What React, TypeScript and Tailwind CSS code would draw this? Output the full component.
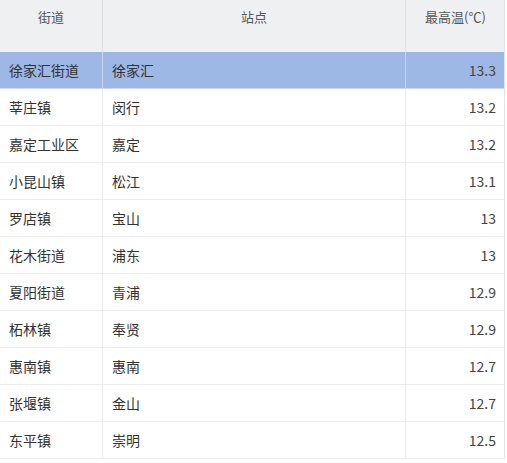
import React from "react";

const rows: [string, string, string][] = [
  ["徐家汇街道", "徐家汇", "13.3"],
  ["莘庄镇", "闵行", "13.2"],
  ["嘉定工业区", "嘉定", "13.2"],
  ["小昆山镇", "松江", "13.1"],
  ["罗店镇", "宝山", "13"],
  ["花木街道", "浦东", "13"],
  ["夏阳街道", "青浦", "12.9"],
  ["柘林镇", "奉贤", "12.9"],
  ["惠南镇", "惠南", "12.7"],
  ["张堰镇", "金山", "12.7"],
  ["东平镇", "崇明", "12.5"],
];

export default function App() {
  return (
    <div
      className="w-[507px] h-[463px] bg-white overflow-hidden text-[14px] text-[#333]"
      style={{ fontFamily: '"Noto Sans CJK SC", "Noto Sans", sans-serif' }}
    >
      <div className="w-[505px] border-r border-[#e3e3e3]">
        <div className="grid grid-cols-[103px_303px_99px] h-[52px] bg-[#eef0f2] text-[#555] text-[13px]">
          <div className="border-r border-[#e0e0e0] flex justify-center pt-[7px]">街道</div>
          <div className="border-r border-[#e0e0e0] flex justify-center pt-[7px]">站点</div>
          <div className="flex justify-center pt-[7px]">最高温(℃)</div>
        </div>
        {rows.map((r, i) => (
          <div
            key={i}
            className={`grid grid-cols-[103px_303px_99px] h-[37px] border-b ${
              i === 0 ? "bg-[#9db8e4] border-[#c9d6ee]" : "bg-white border-[#ececec]"
            }`}
          >
            <div className={`flex items-center pl-[9px] border-r ${i === 0 ? "border-[#c9d6ee]" : "border-[#ececec]"}`}>{r[0]}</div>
            <div className={`flex items-center pl-[9px] border-r ${i === 0 ? "border-[#c9d6ee]" : "border-[#ececec]"}`}>{r[1]}</div>
            <div className="flex items-center justify-end pr-[9px] text-[#444]">{r[2]}</div>
          </div>
        ))}
      </div>
    </div>
  );
}
